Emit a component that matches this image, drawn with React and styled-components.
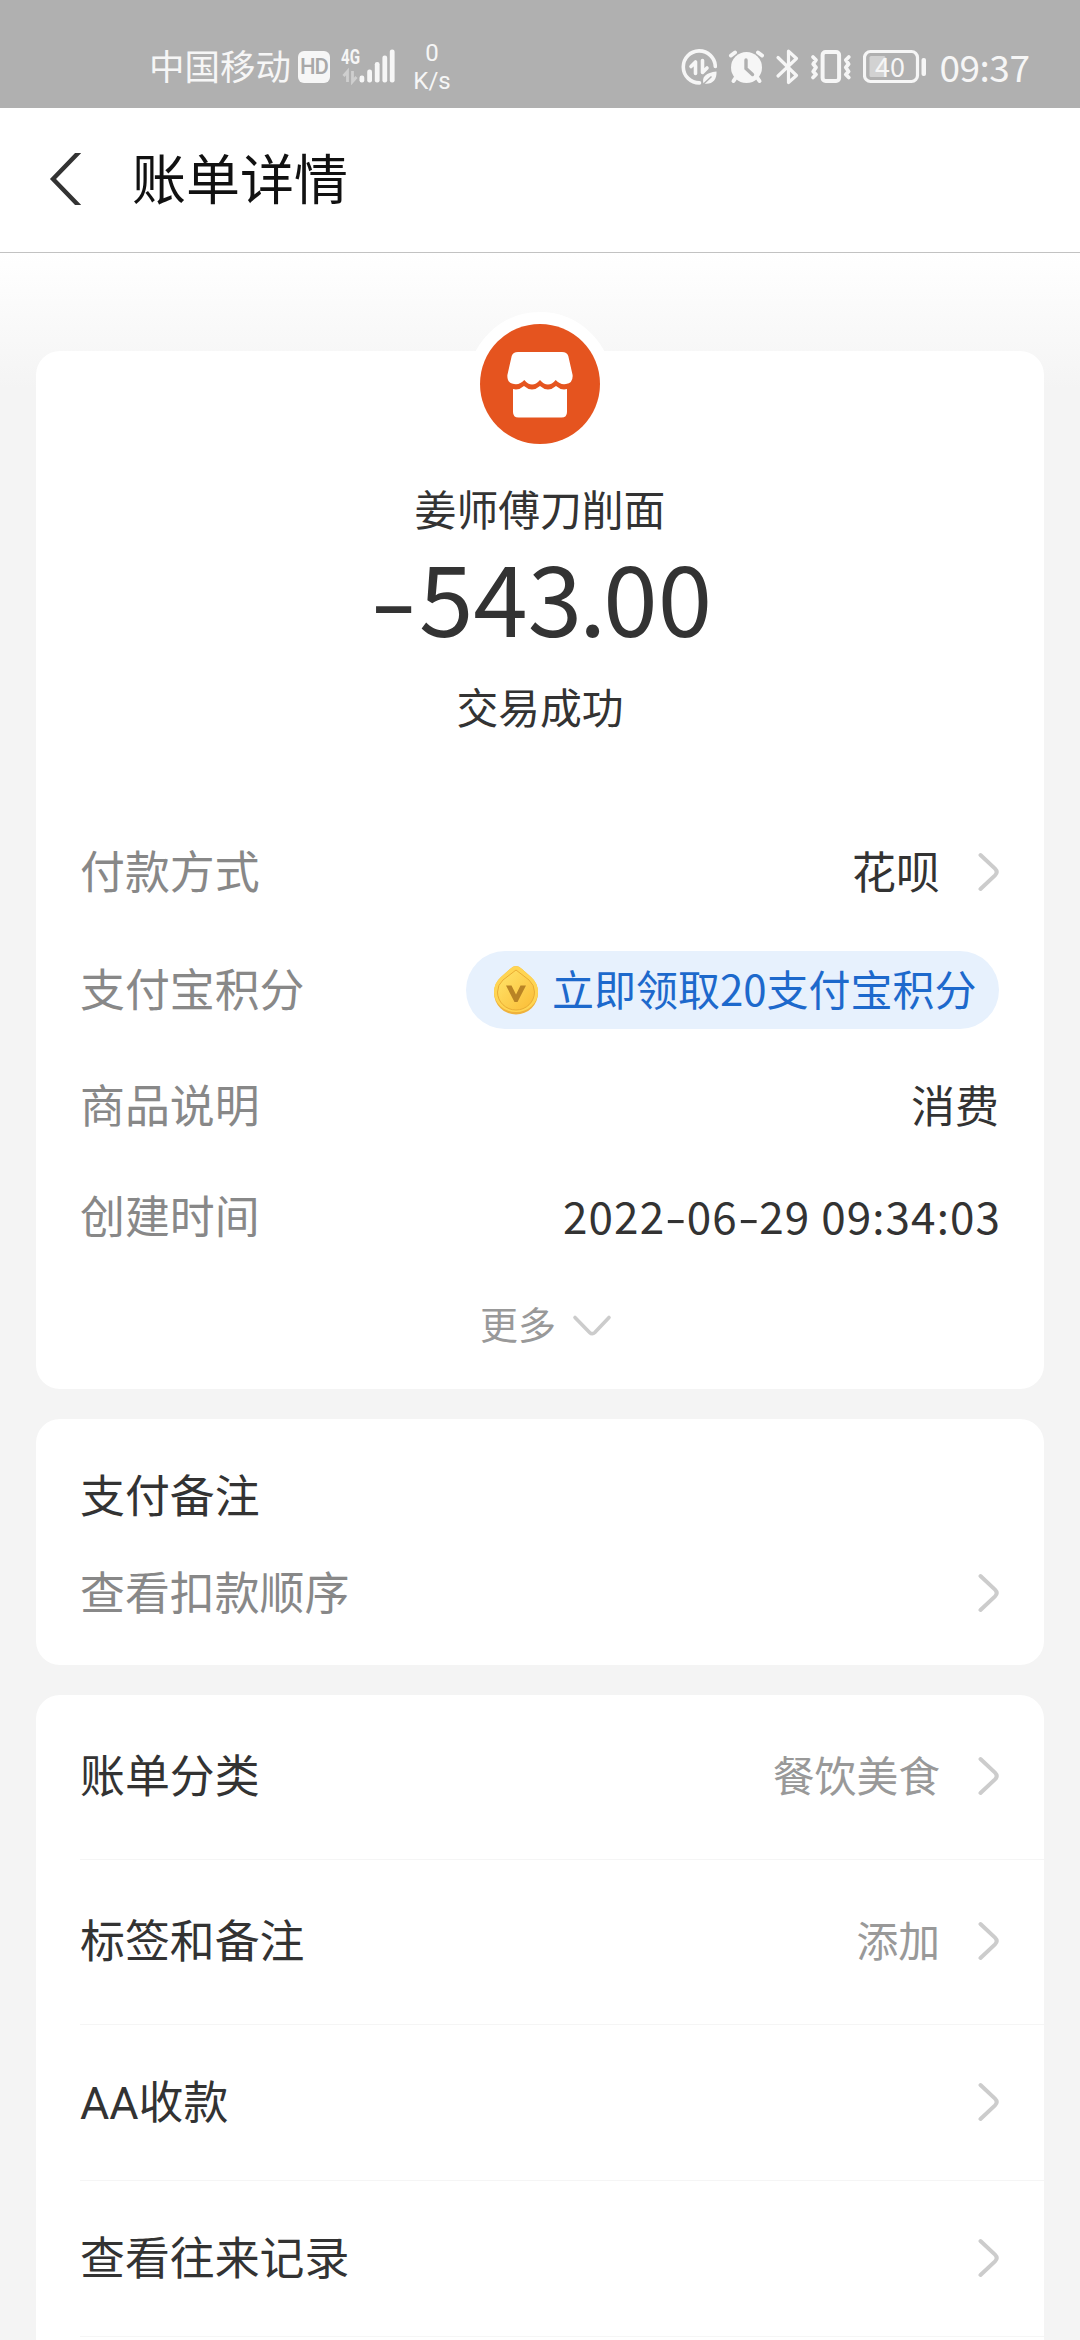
import React from "react";
import styled, { createGlobalStyle } from "styled-components";

const cjk = `"Noto Sans CJK SC", "Noto Sans", sans-serif`;

const GlobalStyle = createGlobalStyle`
  * {
    box-sizing: border-box;
  }

  body {
    margin: 0;
    background: #f4f4f4;
    font-family: ${cjk};
    color: #333;
  }
`;

const Screen = styled.div`
  width: 1080px;
  height: 2340px;
  overflow: hidden;
  display: flex;
  flex-direction: column;
`;

const StatusBar = styled.header`
  flex: none;
  height: 108px;
  padding: 0 53px 0 149px;
  background: #b0b0b0;
  color: #f6f6f6;
  display: flex;
  justify-content: space-between;
  align-items: flex-start;
`;

const StatusGroup = styled.div`
  display: flex;
  align-items: center;
  height: 38px;
  margin-top: 48px;
`;

const Carrier = styled.span`
  font-size: 35.5px;
  line-height: 38px;
  padding-bottom: 4px;
`;

const HdBadge = styled.span`
  width: 32px;
  height: 32px;
  margin-left: 7px;
  border-radius: 6px;
  background: #f6f6f6;
  color: #a8a8a8;
  font: 500 22px/32px Roboto, sans-serif;
  text-align: center;
  letter-spacing: -1px;
`;

const Signal = styled.svg`
  width: 56px;
  height: 38px;
  margin-left: 10px;
  overflow: visible;
`;

const Speed = styled.div`
  margin-left: 16px;
  width: 40px;
  font: 400 24px/28px Roboto, sans-serif;
  text-align: center;
`;

const StatusIcon = styled.svg`
  width: ${(p) => p.$w}px;
  height: 38px;
  margin-right: ${(p) => p.$gap}px;
`;

const Clock = styled.span`
  width: 87.5px;
  padding-bottom: 3px;
  font-size: 37px;
  line-height: 38px;
  letter-spacing: -0.5px;
  white-space: nowrap;
`;

const TitleBar = styled.div`
  flex: none;
  height: 145px;
  padding: 0 0 2px 49px;
  background: #fff;
  border-bottom: 1px solid #c2c2c2;
  display: flex;
  align-items: center;
  gap: 51px;
`;

const Title = styled.h1`
  margin: 0;
  padding-bottom: 5px;
  font-size: 54px;
  font-weight: 400;
  line-height: 64px;
  color: #111;
`;

const Content = styled.main`
  flex: 1;
  padding: 98px 36px 0;
  background: linear-gradient(#fff, #f4f4f4 136px);
  display: flex;
  flex-direction: column;
  gap: 30px;
`;

const Card = styled.section`
  flex: none;
  height: ${(p) => p.$height}px;
  border-radius: 24px;
  background: #fff;
  display: flex;
  flex-direction: column;
`;

const Avatar = styled.div`
  width: 144px;
  height: 144px;
  margin: -39px auto 0;
  border: 12px solid #fff;
  border-radius: 50%;
  background: #fff;

  svg {
    display: block;
  }
`;

const Summary = styled.p`
  margin: ${(p) => p.$top}px 0 0;
  font-size: 41.8px;
  line-height: 60px;
  text-align: center;
`;

const Amount = styled.p`
  margin: 6px 0 0;
  font-size: 98px;
  line-height: 100px;
  text-align: center;
`;

const Point = styled.span`
  margin: 0 -3px;
`;

const Dash = styled.span`
  display: inline-block;
  width: ${(p) => p.$width}px;
  text-align: center;
  letter-spacing: 0;
  transform: scaleX(${(p) => p.$stretch});
`;

const Details = styled.div`
  margin-top: 78px;
`;

const DetailRow = styled.div`
  height: ${(p) => p.$height}px;
  padding: 0 45px 0 44px;
  display: flex;
  justify-content: space-between;
  align-items: center;
`;

const Label = styled.span`
  padding-bottom: 4px;
  font-size: 44.9px;
  line-height: 54px;
  color: ${(p) => (p.$muted ? "#888" : "#333")};
`;

const Latin = styled.span`
  font-family: Roboto, sans-serif;
  line-height: 0;
`;

const Value = styled(Label)`
  font-size: ${(p) => p.$size || 44}px;
  color: ${(p) => (p.$muted ? "#999" : "#333")};
`;

const Time = styled(Label)`
  margin-right: -2px;
  font-size: 44px;
  letter-spacing: 1.1px;
`;

const Right = styled.div`
  display: flex;
  align-items: center;
  gap: 38px;
`;

const PointsPill = styled.button`
  width: 533px;
  height: 78px;
  padding: 0 0 0 28px;
  border: none;
  border-radius: 39px;
  background: #e7f1fd;
  display: flex;
  align-items: center;
  gap: 14px;
  font-family: ${cjk};

  span {
    padding-bottom: 5px;
    font-size: 42px;
    line-height: 54px;
    color: #1d69cc;
    white-space: nowrap;
  }
`;

const More = styled.div`
  height: 104px;
  padding-left: 12px;
  display: flex;
  align-items: center;
  justify-content: center;
  gap: 16px;
  font-size: 38px;
  line-height: 50px;
  color: #999;

  span {
    padding-bottom: 3px;
  }

  svg {
    margin-top: 3px;
  }
`;

const NoteCard = styled(Card)`
  padding-top: 29px;
`;

const ListRow = styled.div`
  flex: none;
  height: ${(p) => p.$height}px;
  margin-left: 44px;
  padding: 0 45px 2px 0;
  border-bottom: 1px solid #f5f5f5;
  display: flex;
  justify-content: space-between;
  align-items: center;
`;

const Chevron = () => (
  <svg width="21" height="40" viewBox="0 0 21 40" fill="none">
    <path
      d="M2.500 3 17 16.600Q20.400 20 17 23.400L2.500 37"
      stroke="#ccc"
      strokeWidth="4"
      strokeLinecap="round"
    />
  </svg>
);

const ChevronDown = () => (
  <svg width="40" height="24" viewBox="0 0 40 24" fill="none">
    <path
      d="M3 3.500 17.600 18.400Q20.200 21 22.800 18.400L37 3.500"
      stroke="#ccc"
      strokeWidth="3.600"
      strokeLinecap="round"
    />
  </svg>
);

const Shop = () => (
  <svg width="120" height="120" viewBox="0 0 120 120">
    <circle cx="60" cy="60" r="60" fill="#e5541f" />
    <path
      d="M38 28H82Q87 28 88.300 32L92.600 51Q93.200 59 86 60Q80 61 75.700 56Q68 65 60 56Q52 65 44.300 56Q40 61 34 60Q26.800 59 27.400 51L31.700 32Q33 28 38 28Z"
      fill="#fff"
    />
    <path
      d="M33 65Q39 66.500 44 62Q52 69 60 62Q68 69 76 62Q81 66.500 87 65V88Q87 93.500 81.500 93.500H38.500Q33 93.500 33 88Z"
      fill="#fff"
    />
  </svg>
);

const Coin = () => (
  <svg width="44" height="50" viewBox="0 0 44 50">
    <defs>
      <linearGradient id="coin" x1="0" y1="0" x2="1" y2="1">
        <stop offset="0" stopColor="#ffe56b" />
        <stop offset="1" stopColor="#fbbc35" />
      </linearGradient>
    </defs>
    <path
      d="M22 1Q25 1 28 4L37 12Q44 18 44 28A22 21.500 0 0 1 0 28Q0 18 7 12L16 4Q19 1 22 1Z"
      fill="#efb23c"
    />
    <path
      d="M22 1Q25 1 28 4L37 12Q44 18 44 27A22 20 0 0 1 0 27Q0 18 7 12L16 4Q19 1 22 1Z"
      fill="#ffd552"
    />
    <path
      d="M22 5 35 15Q40.500 20 40.500 27A18.500 18 0 0 1 3.500 27Q3.500 20 9 15Z"
      fill="url(#coin)"
      stroke="#e9ac34"
      strokeWidth="1"
    />
    <path d="M12 20.500H17.500L22 29.500 26.500 20.500H32L23.500 37H20.500Z" fill="#b98325" />
  </svg>
);

const SignalIcon = () => (
  <Signal viewBox="0 0 56 38" fill="#f6f6f6">
    <text
      x="1"
      y="16"
      fontFamily="Roboto, sans-serif"
      fontWeight="700"
      fontSize="21"
      textLength="19"
      lengthAdjust="spacingAndGlyphs"
    >
      4G
    </text>
    <path
      d="M7.500 34V23.500L3.500 28M12.500 23V33.500L16.500 29"
      fill="none"
      stroke="#cfcfcf"
      strokeWidth="2.800"
    />
    <rect x="19.500" y="27.500" width="4.800" height="7" rx="2.200" />
    <rect x="27.200" y="21.500" width="4.800" height="13" rx="2.200" />
    <rect x="34.800" y="14" width="4.800" height="20.500" rx="2.200" />
    <rect x="42.400" y="7.500" width="4.800" height="27" rx="2.200" />
    <rect x="49.800" y="1.500" width="4.800" height="33" rx="2.200" />
  </Signal>
);

const DataSaverIcon = () => (
  <StatusIcon $w={36} $gap={11} viewBox="0 0 36 38" fill="none" stroke="#f6f6f6">
    <path d="M34.300 18.500A16 16 0 1 0 18.500 34.900" strokeWidth="3.600" strokeLinecap="round" />
    <path d="M10 18.500 14.500 14V25.500" strokeWidth="3.600" strokeLinecap="round" strokeLinejoin="round" />
    <path d="M21.500 12.500V24.500L26 20" strokeWidth="3.600" strokeLinecap="round" strokeLinejoin="round" />
    <path
      d="M22.500 35.500C20.500 29 25 24.500 35.500 23.500C36 32 31 37 22.500 35.500Z"
      fill="#f6f6f6"
      stroke="none"
    />
    <path d="M22 36.500 30.500 28.500" stroke="#b0b0b0" strokeWidth="1.400" />
  </StatusIcon>
);

const AlarmIcon = () => (
  <StatusIcon $w={36} $gap={11} viewBox="0 0 36 38" fill="none" stroke="#f6f6f6">
    <circle cx="18.500" cy="19.500" r="15.500" fill="#f6f6f6" stroke="none" />
    <path d="M3 7.500 7 4.500M34 7.500 30 4.500" strokeWidth="4" strokeLinecap="round" />
    <path d="M7.500 30 5.500 33M29.500 30 31.500 33" strokeWidth="4" strokeLinecap="round" />
    <path d="M18 12V20.500L24.500 26.500" stroke="#b0b0b0" strokeWidth="3.400" strokeLinecap="round" />
  </StatusIcon>
);

const BluetoothIcon = () => (
  <StatusIcon $w={24} $gap={11} viewBox="0 0 24 38" fill="none">
    <path
      d="M3 9.500 21.500 27.500 13.500 34.500V3.200L21.500 10.500 3 28"
      stroke="#f6f6f6"
      strokeWidth="3.200"
      strokeLinecap="round"
      strokeLinejoin="round"
    />
  </StatusIcon>
);

const VibrateIcon = () => (
  <StatusIcon $w={42} $gap={11} viewBox="0 0 42 38" fill="none" stroke="#f6f6f6">
    <rect x="12.600" y="4" width="16.500" height="29" rx="3" strokeWidth="4" />
    <path
      d="M3 9 6 12 3.200 16 6 19.500 3.200 23.500 6 26.500 3 29.500M38.800 9 35.800 12 38.600 16 35.800 19.500 38.600 23.500 35.800 26.500 38.800 29.500"
      strokeWidth="3.800"
      strokeLinecap="round"
      strokeLinejoin="round"
    />
  </StatusIcon>
);

const BatteryIcon = () => (
  <StatusIcon $w={64} $gap={12.5} viewBox="0 0 64 38" fill="none">
    <rect x="1.500" y="3.500" width="53" height="30" rx="6" stroke="#f6f6f6" strokeWidth="3.200" />
    <rect x="6.500" y="8" width="16" height="21" rx="1.500" fill="#d2d2d2" />
    <rect x="58.500" y="10" width="4.500" height="18" rx="2" fill="#f6f6f6" />
    <text
      x="27"
      y="28.500"
      fill="#f6f6f6"
      fontFamily="Noto Sans CJK SC, sans-serif"
      fontSize="27"
      textAnchor="middle"
    >
      40
    </text>
  </StatusIcon>
);

const BackIcon = () => (
  <svg width="32" height="52" viewBox="0 0 32 52" fill="none">
    <path d="M32-3 4 26 32 55" stroke="#333" strokeWidth="4.400" />
  </svg>
);

const listItems = [
  { label: "账单分类", value: "餐饮美食", height: 165 },
  { label: "标签和备注", value: "添加", height: 165 },
  { latin: "AA", label: "收款", height: 156 },
  { label: "查看往来记录", height: 156 },
];

const App = () => {
  return (
    <>
      <GlobalStyle />
      <Screen>
        <StatusBar>
          <StatusGroup>
            <Carrier>中国移动</Carrier>
            <HdBadge>HD</HdBadge>
            <SignalIcon />
            <Speed>
              <div>0</div>
              <div>K/s</div>
            </Speed>
          </StatusGroup>
          <StatusGroup>
            <DataSaverIcon />
            <AlarmIcon />
            <BluetoothIcon />
            <VibrateIcon />
            <BatteryIcon />
            <Clock>09:37</Clock>
          </StatusGroup>
        </StatusBar>
        <TitleBar>
          <BackIcon />
          <Title>账单详情</Title>
        </TitleBar>
        <Content>
          <Card $height={1038}>
            <Avatar>
              <Shop />
            </Avatar>
            <Summary $top={22}>姜师傅刀削面</Summary>
            <Amount>
              <Dash $width={51} $stretch={1.4}>
                -
              </Dash>
              543<Point>.</Point>00
            </Amount>
            <Summary $top={32}>交易成功</Summary>
            <Details>
              <DetailRow $height={116}>
                <Label $muted>付款方式</Label>
                <Right>
                  <Value>花呗</Value>
                  <Chevron />
                </Right>
              </DetailRow>
              <DetailRow $height={120}>
                <Label $muted>支付宝积分</Label>
                <PointsPill>
                  <Coin />
                  <span>立即领取20支付宝积分</span>
                </PointsPill>
              </DetailRow>
              <DetailRow $height={112}>
                <Label $muted>商品说明</Label>
                <Value>消费</Value>
              </DetailRow>
              <DetailRow $height={110}>
                <Label $muted>创建时间</Label>
                <Time>
                  2022
                  <Dash $width={21.5} $stretch={1.4}>
                    -
                  </Dash>
                  06
                  <Dash $width={21.5} $stretch={1.4}>
                    -
                  </Dash>
                  29 09:34:03
                </Time>
              </DetailRow>
              <More>
                <span>更多</span>
                <ChevronDown />
              </More>
            </Details>
          </Card>
          <NoteCard $height={246}>
            <DetailRow $height={96}>
              <Label>支付备注</Label>
            </DetailRow>
            <DetailRow $height={98}>
              <Label $muted>查看扣款顺序</Label>
              <Chevron />
            </DetailRow>
          </NoteCard>
          <Card $height={700}>
            {listItems.map(({ latin, label, value, height }) => (
              <ListRow key={label} $height={height}>
                <Label>
                  {latin && <Latin>{latin}</Latin>}
                  {label}
                </Label>
                <Right>
                  {value && (
                    <Value $muted $size={41.8}>
                      {value}
                    </Value>
                  )}
                  <Chevron />
                </Right>
              </ListRow>
            ))}
          </Card>
        </Content>
      </Screen>
    </>
  );
};

export default App;
